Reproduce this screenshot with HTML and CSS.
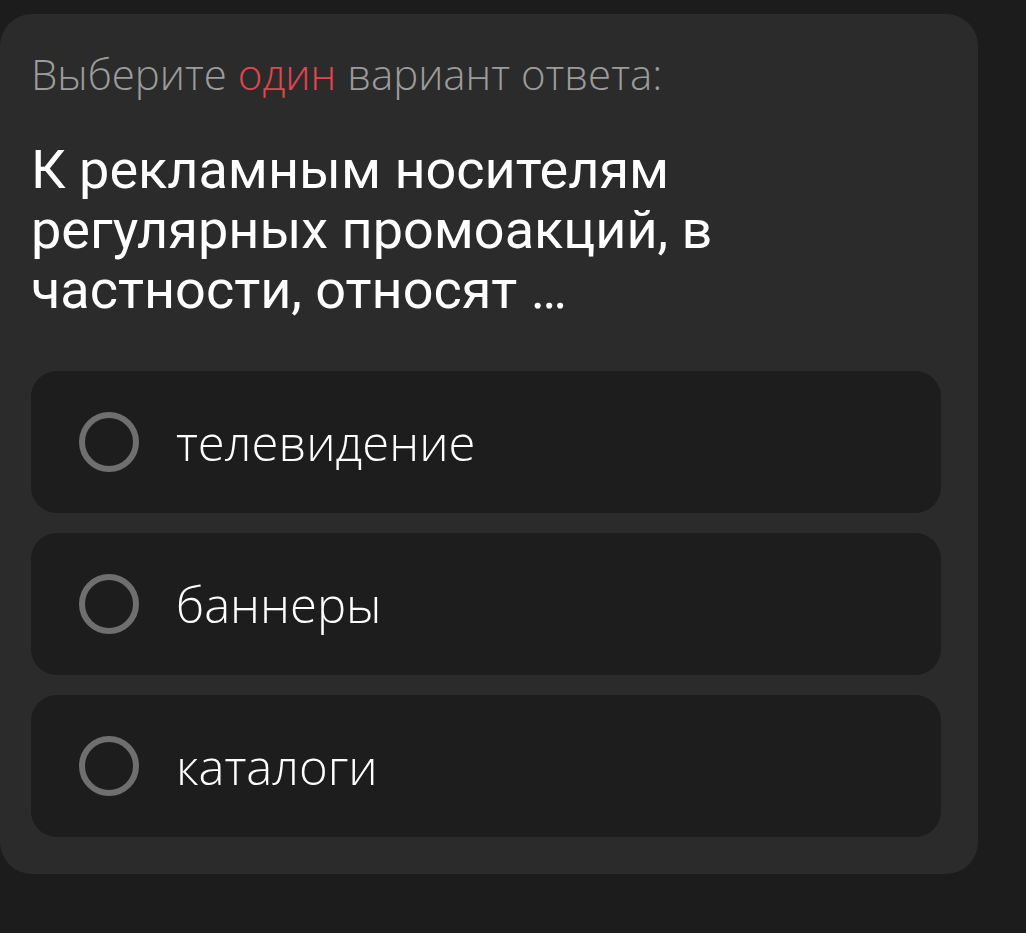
FILE: index.html
```html
<!DOCTYPE html>
<html lang="ru">
<head>
    <meta charset="UTF-8">
    <meta name="viewport" content="width=device-width, initial-scale=1.0">
    <title>Тест</title>
    <link rel="stylesheet" href="styles.css">
</head>
<body>
    <div class="card">
        <p class="hint">Выберите <span class="accent">один</span> вариант ответа:</p>
        <p class="question">К рекламным носителям регулярных промоакций, в частности, относят …</p>
        <div class="options">
            <label class="option">
                <span class="radio"></span>
                <span class="option-text">телевидение</span>
            </label>
            <label class="option">
                <span class="radio"></span>
                <span class="option-text">баннеры</span>
            </label>
            <label class="option">
                <span class="radio"></span>
                <span class="option-text">каталоги</span>
            </label>
        </div>
    </div>
</body>
</html>
```

FILE: styles.css
```css
*{
    padding: 0;
    margin: 0;
    box-sizing: border-box;
}
body{
    background-color: #1c1c1c;
    font-family: "Open Sans", Arial, sans-serif;
    height: 933px;
    overflow: hidden;
}
.card{
    width: 978px;
    margin-top: 14px;
    padding: 30px 37px 37px 31px;
    background-color: #2b2b2b;
    border-radius: 32px;
}
.hint{
    font-size: 42px;
    font-weight: 300;
    line-height: 60px;
    color: #9c9c9c;
}
.accent{
    color: #e2454e;
}
.question{
    margin-top: 36px;
    font-family: Roboto, Arial, sans-serif;
    font-size: 54px;
    line-height: 60px;
    color: #ffffff;
    width: 720px;
}
.options{
    margin-top: 51px;
    display: flex;
    flex-direction: column;
    gap: 20px;
}
.option{
    display: flex;
    align-items: center;
    height: 142px;
    padding-left: 48px;
    background-color: #1d1d1d;
    border-radius: 26px;
}
.radio{
    width: 60px;
    height: 60px;
    border: 6px solid #6f6f6f;
    border-radius: 50%;
    flex-shrink: 0;
}
.option-text{
    margin-left: 37px;
    font-size: 49px;
    font-weight: 300;
    color: #ffffff;
}
```
